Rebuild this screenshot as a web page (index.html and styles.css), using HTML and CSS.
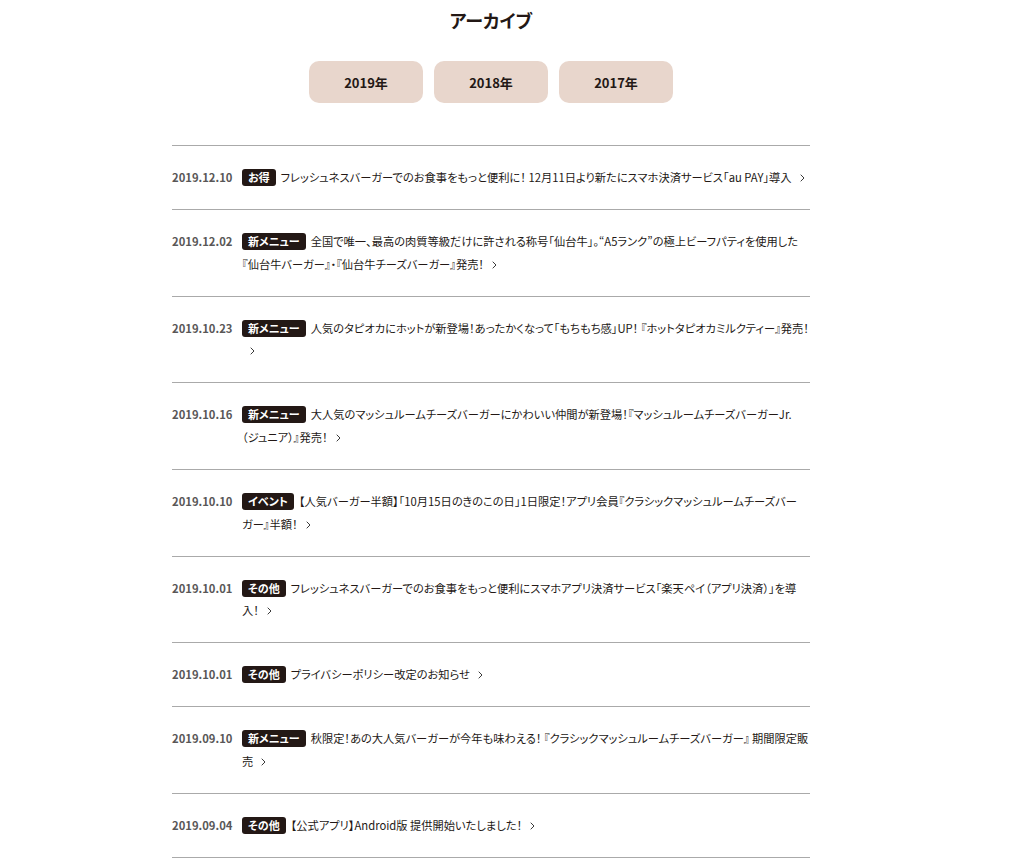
FILE: index.html
```html
<!DOCTYPE html>
<html lang="ja">
<head>
<meta charset="utf-8">
<title>アーカイブ</title>
<link rel="stylesheet" href="styles.css">
</head>
<body>
<div class="page">
  <h1 class="title">アーカイブ</h1>
  <nav class="years">
    <a class="year" href="#">2019年</a>
    <a class="year" href="#">2018年</a>
    <a class="year" href="#">2017年</a>
  </nav>
  <ul class="news">
    <li class="item">
      <span class="date">2019.12.10</span>
      <p class="body"><span class="tag">お得</span>フレッシュネスバーガーでのお食事をもっと便利に！ 12月11日より新たにスマホ決済サービス「au PAY」導入<svg class="arrow" viewBox="0 0 5 8"><path d="M0.7 0.7l3.3 3.3-3.3 3.3"/></svg></p>
    </li>
    <li class="item">
      <span class="date">2019.12.02</span>
      <p class="body"><span class="tag">新メニュー</span>全国で唯一、最高の肉質等級だけに許される称号「仙台牛」。“A5ランク”の極上ビーフパティを使用した『仙台牛バーガー』・『仙台牛チーズバーガー』発売！<svg class="arrow" viewBox="0 0 5 8"><path d="M0.7 0.7l3.3 3.3-3.3 3.3"/></svg></p>
    </li>
    <li class="item">
      <span class="date">2019.10.23</span>
      <p class="body"><span class="tag">新メニュー</span>人気のタピオカにホットが新登場！あったかくなって「もちもち感」UP！ 『ホットタピオカミルクティー』発売！<svg class="arrow" viewBox="0 0 5 8"><path d="M0.7 0.7l3.3 3.3-3.3 3.3"/></svg></p>
    </li>
    <li class="item">
      <span class="date">2019.10.16</span>
      <p class="body"><span class="tag">新メニュー</span>大人気のマッシュルームチーズバーガーにかわいい仲間が新登場！『マッシュルームチーズバーガーJr.<span class="keep">（ジュニア）』発売！</span><svg class="arrow" viewBox="0 0 5 8"><path d="M0.7 0.7l3.3 3.3-3.3 3.3"/></svg></p>
    </li>
    <li class="item">
      <span class="date">2019.10.10</span>
      <p class="body"><span class="tag">イベント</span>【人気バーガー半額】「10月15日のきのこの日」1日限定！アプリ会員『クラシックマッシュルームチーズバー<span class="keep">ガー』</span>半額！<svg class="arrow" viewBox="0 0 5 8"><path d="M0.7 0.7l3.3 3.3-3.3 3.3"/></svg></p>
    </li>
    <li class="item">
      <span class="date">2019.10.01</span>
      <p class="body"><span class="tag">その他</span>フレッシュネスバーガーでのお食事をもっと便利にスマホアプリ決済サービス「楽天ペイ（アプリ決済）」を導入！<svg class="arrow" viewBox="0 0 5 8"><path d="M0.7 0.7l3.3 3.3-3.3 3.3"/></svg></p>
    </li>
    <li class="item">
      <span class="date">2019.10.01</span>
      <p class="body"><span class="tag">その他</span>プライバシーポリシー改定のお知らせ<svg class="arrow" viewBox="0 0 5 8"><path d="M0.7 0.7l3.3 3.3-3.3 3.3"/></svg></p>
    </li>
    <li class="item">
      <span class="date">2019.09.10</span>
      <p class="body"><span class="tag">新メニュー</span>秋限定！あの大人気バーガーが今年も味わえる！ 『クラシックマッシュルームチーズバーガー』 期間限定販売<svg class="arrow" viewBox="0 0 5 8"><path d="M0.7 0.7l3.3 3.3-3.3 3.3"/></svg></p>
    </li>
    <li class="item">
      <span class="date">2019.09.04</span>
      <p class="body"><span class="tag">その他</span>【公式アプリ】Android版 提供開始いたしました！<svg class="arrow" viewBox="0 0 5 8"><path d="M0.7 0.7l3.3 3.3-3.3 3.3"/></svg></p>
    </li>
  </ul>
</div>
</body>
</html>
```

FILE: styles.css
```css
* {
  box-sizing: border-box;
}

body {
  margin: 0;
  background: #ffffff;
  color: #231815;
  font-family: "Noto Sans CJK JP", "Noto Sans", sans-serif;
  font-feature-settings: "palt";
}

.page {
  width: 638px;
  margin-left: 172px;
  padding-top: 8px;
}

.title {
  margin: 0;
  text-align: center;
  font-size: 18px;
  line-height: 24px;
  font-weight: 700;
  color: #231815;
}

.years {
  display: flex;
  justify-content: center;
  gap: 11px;
  margin-top: 29px;
}

.year {
  display: flex;
  align-items: center;
  justify-content: center;
  width: 114px;
  height: 42px;
  border-radius: 10px;
  background: #e8d6cc;
  color: #231815;
  font-size: 13px;
  font-weight: 700;
  text-decoration: none;
}

.news {
  list-style: none;
  margin: 42px 0 0;
  padding: 0;
  border-bottom: 1px solid #aaaaaa;
}

.item {
  display: flex;
  border-top: 1px solid #aaaaaa;
  padding: 20.17px 0;
}

.date {
  flex: 0 0 70px;
  font-size: 11.25px;
  line-height: 22.67px;
  font-weight: 700;
  color: #595757;
}

.body {
  flex: 1;
  margin: 0;
  font-size: 11.25px;
  line-height: 22.67px;
  color: #231815;
}

.keep {
  white-space: nowrap;
}

.tag {
  display: inline-block;
  margin-right: 5px;
  padding: 0 6px;
  height: 17px;
  line-height: 17px;
  border-radius: 3px;
  background: #231815;
  color: #ffffff;
  font-size: 11px;
  font-weight: 700;
  vertical-align: 0;
}

.arrow {
  display: inline-block;
  width: 5px;
  height: 8px;
  margin-left: 8px;
  vertical-align: 0;
  fill: none;
  stroke: #3a3a3a;
  stroke-width: 1;
}
```
